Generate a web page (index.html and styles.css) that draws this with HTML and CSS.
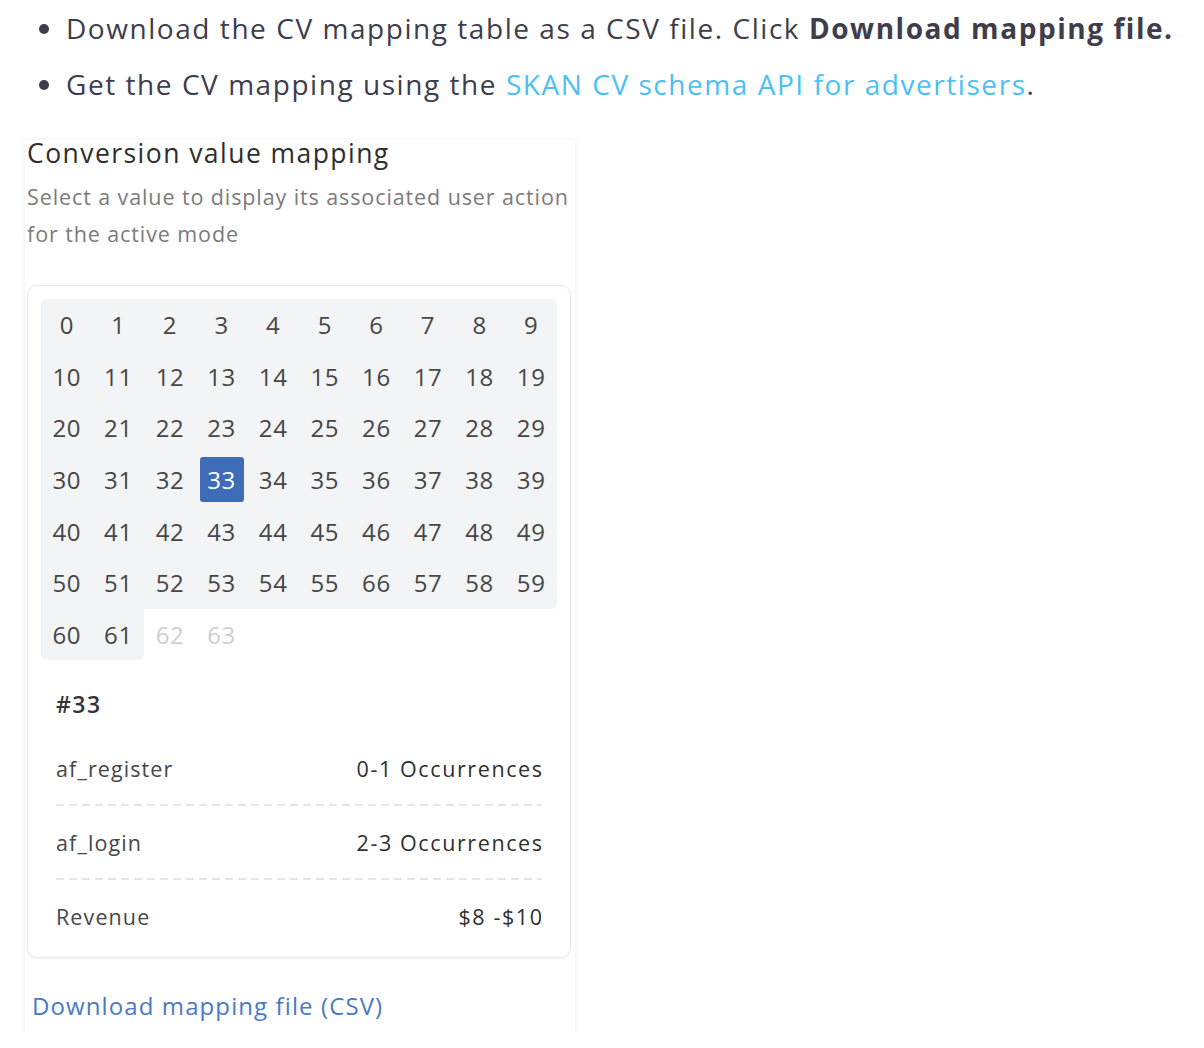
FILE: index.html
```html
<!DOCTYPE html>
<html lang="en">
<head>
<meta charset="utf-8">
<title>Conversion value mapping</title>
<link rel="stylesheet" href="styles.css">
</head>
<body>
<ul class="steps">
  <li>Download the CV mapping table as a CSV file. Click <strong>Download mapping file.</strong></li>
  <li>Get the CV mapping using the <a class="ext-link" href="#">SKAN CV schema API for advertisers</a>.</li>
</ul>

<section class="cv-card">
  <h2 class="cv-title">Conversion value mapping</h2>
  <p class="cv-sub">Select a value to display its associated user action<br>for the active mode</p>

  <div class="cv-panel">
    <div class="cv-grid">
      <span class="cell c-tl">0</span><span class="cell">1</span><span class="cell">2</span><span class="cell">3</span><span class="cell">4</span><span class="cell">5</span><span class="cell">6</span><span class="cell">7</span><span class="cell">8</span><span class="cell c-tr">9</span>
      <span class="cell">10</span><span class="cell">11</span><span class="cell">12</span><span class="cell">13</span><span class="cell">14</span><span class="cell">15</span><span class="cell">16</span><span class="cell">17</span><span class="cell">18</span><span class="cell">19</span>
      <span class="cell">20</span><span class="cell">21</span><span class="cell">22</span><span class="cell">23</span><span class="cell">24</span><span class="cell">25</span><span class="cell">26</span><span class="cell">27</span><span class="cell">28</span><span class="cell">29</span>
      <span class="cell">30</span><span class="cell">31</span><span class="cell">32</span><span class="cell is-active"><span class="pill">33</span></span><span class="cell">34</span><span class="cell">35</span><span class="cell">36</span><span class="cell">37</span><span class="cell">38</span><span class="cell">39</span>
      <span class="cell">40</span><span class="cell">41</span><span class="cell">42</span><span class="cell">43</span><span class="cell">44</span><span class="cell">45</span><span class="cell">46</span><span class="cell">47</span><span class="cell">48</span><span class="cell">49</span>
      <span class="cell">50</span><span class="cell">51</span><span class="cell">52</span><span class="cell">53</span><span class="cell">54</span><span class="cell">55</span><span class="cell">66</span><span class="cell">57</span><span class="cell">58</span><span class="cell c-br">59</span>
      <span class="cell c-bl">60</span><span class="cell c-br">61</span><span class="cell is-disabled">62</span><span class="cell is-disabled">63</span>
    </div>

    <div class="cv-detail">
      <div class="cv-id">#33</div>
      <div class="cv-row"><span class="cv-key">af_register</span><span class="cv-val">0-1 Occurrences</span></div>
      <div class="cv-row"><span class="cv-key">af_login</span><span class="cv-val">2-3 Occurrences</span></div>
      <div class="cv-row last"><span class="cv-key">Revenue</span><span class="cv-val">$8 -$10</span></div>
    </div>
  </div>

  <a class="cv-download" href="#">Download mapping file (CSV)</a>
</section>
</body>
</html>
```

FILE: styles.css
```css
html, body {
  margin: 0;
  padding: 0;
  background: #ffffff;
}

body {
  font-family: "Open Sans", "Noto Sans", "Liberation Sans", sans-serif;
  color: #3e3d4b;
}

.steps {
  margin: 0;
  padding: 0 0 0 66px;
  font-size: 28px;
  line-height: 56px;
  letter-spacing: 1.55px;
  color: #3e3d4b;
}

.steps li::marker {
  color: #3e3d4b;
}

.steps strong {
  font-weight: 700;
}

.ext-link {
  color: #4cc0f5;
  text-decoration: none;
}

.cv-card {
  margin: 28px 0 0 25px;
  width: 550px;
  box-sizing: border-box;
  padding: 0 4px 12px 2px;
  background: #fff;
  box-shadow: 0 1px 4px rgba(30, 40, 80, 0.1);
}

.cv-title {
  margin: 0;
  font-size: 26.5px;
  font-weight: 400;
  line-height: 26px;
  letter-spacing: 1.45px;
  color: #2e2e2e;
}

.cv-sub {
  margin: 12px 0 0;
  font-size: 21.5px;
  line-height: 37px;
  letter-spacing: 0.9px;
  color: #7b7b7b;
}

.cv-panel {
  margin-top: 33px;
  border: 1px solid #e7e9ef;
  border-radius: 10px;
  box-shadow: 0 1px 2px rgba(30, 40, 80, 0.06);
  padding: 13px 13px 3px;
}

.cv-grid {
  display: grid;
  grid-template-columns: repeat(10, 1fr);
  grid-auto-rows: 51.6px;
}

.cell {
  display: flex;
  align-items: center;
  justify-content: center;
  background: #f3f4f6;
  font-size: 24px;
  letter-spacing: 0.6px;
  color: #464646;
}

.c-tl { border-top-left-radius: 6px; }
.c-tr { border-top-right-radius: 6px; }
.c-br { border-bottom-right-radius: 6px; }
.c-bl { border-bottom-left-radius: 6px; }

.cell.is-disabled {
  background: transparent;
  color: #cfcfcf;
}

.pill {
  display: flex;
  align-items: center;
  justify-content: center;
  width: 44px;
  height: 45px;
  border-radius: 3px;
  background: #3f6cb6;
  color: #ffffff;
}

.cv-detail {
  padding: 0 15px;
}

.cv-id {
  margin-top: 28px;
  line-height: 32px;
  font-size: 23px;
  font-weight: 600;
  letter-spacing: 1.5px;
  color: #353535;
  padding-bottom: 12px;
}

.cv-row {
  display: flex;
  justify-content: space-between;
  align-items: center;
  height: 72px;
  font-size: 21.5px;
  background-image: linear-gradient(to right, #e2e5ec 60%, transparent 60%);
  background-size: 13px 2px;
  background-repeat: repeat-x;
  background-position: left bottom;
  padding-bottom: 2px;
}

.cv-row.last {
  background: none;
}

.cv-key {
  color: #474747;
  letter-spacing: 1.1px;
}

.cv-val {
  color: #2f2f2f;
  letter-spacing: 1.6px;
  margin-right: -1.6px;
}

.cv-download {
  display: block;
  margin: 33px 0 0 5px;
  font-size: 24px;
  line-height: 30px;
  letter-spacing: 1.1px;
  color: #4a7ac4;
  text-decoration: none;
}
```
